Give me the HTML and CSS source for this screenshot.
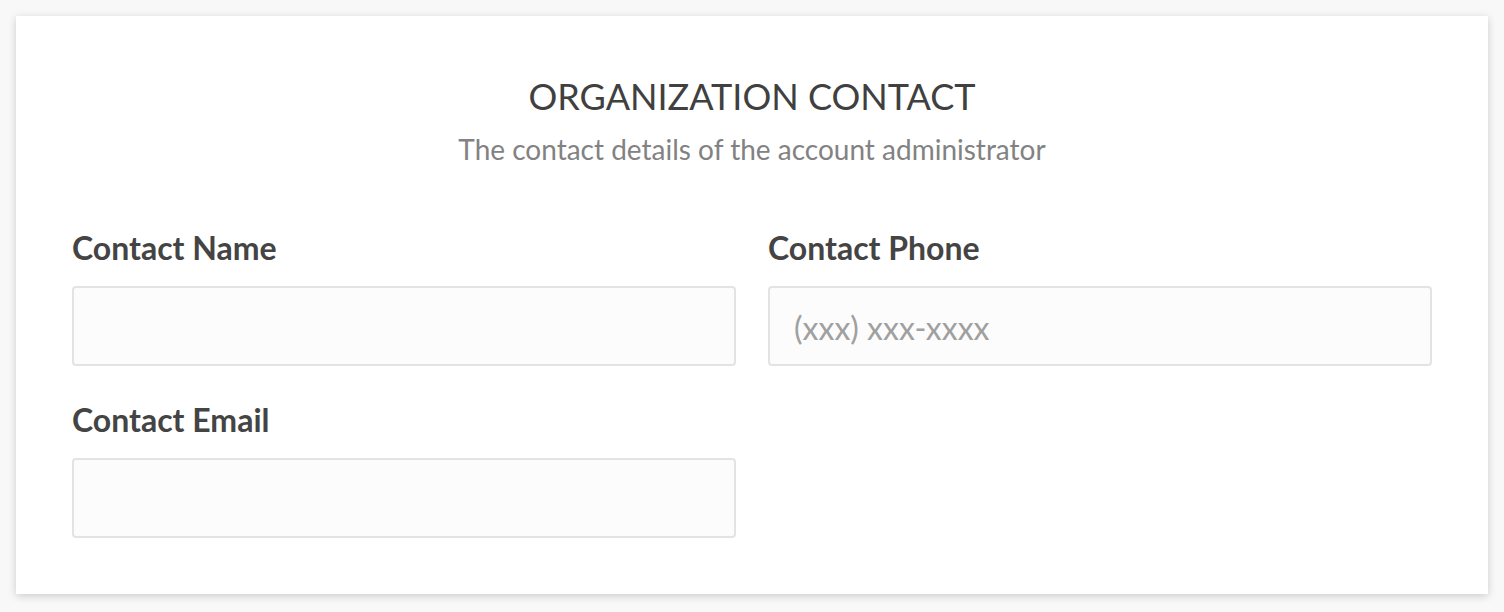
FILE: index.html
```html
<!DOCTYPE html>
<html>
<head>
<meta charset="utf-8">
<link rel="stylesheet" href="styles.css">
</head>
<body>
<div class="card">
  <h1 class="title">ORGANIZATION CONTACT</h1>
  <p class="subtitle">The contact details of the account administrator</p>
  <div class="grid">
    <div class="field">
      <label class="label">Contact Name</label>
      <input class="input" type="text">
    </div>
    <div class="field">
      <label class="label">Contact Phone</label>
      <input class="input" type="text" placeholder="(xxx) xxx-xxxx">
    </div>
    <div class="field">
      <label class="label">Contact Email</label>
      <input class="input" type="text">
    </div>
  </div>
</div>
</body>
</html>
```
FILE: styles.css
```css
html, body {
  margin: 0;
  padding: 0;
  background: #f8f8f8;
  font-family: Lato, "Liberation Sans", sans-serif;
}
body {
  padding: 16px;
}
.card {
  background: #fff;
  box-shadow: 0 2px 8px rgba(0,0,0,0.18);
  padding: 58px 56px 56px;
  height: 578px;
  box-sizing: border-box;
}
.title {
  margin: 0;
  text-align: center;
  font-weight: 400;
  font-size: 36px;
  line-height: 44px;
  color: #404040;
}
.subtitle {
  margin: 14px 0 0;
  text-align: center;
  font-size: 28px;
  line-height: 34px;
  color: #828282;
}
.grid {
  margin-top: 63px;
  display: grid;
  grid-template-columns: 1fr 1fr;
  column-gap: 32px;
  row-gap: 35px;
}
.field {
  display: flex;
  flex-direction: column;
}
.label {
  font-weight: 700;
  font-size: 32px;
  line-height: 38px;
  color: #444;
  margin-bottom: 19px;
}
.input {
  height: 80px;
  box-sizing: border-box;
  border: 2px solid #e3e3e3;
  border-radius: 4px;
  background: #fcfcfc;
  padding: 2px 24px 0;
  font-family: Lato, "Liberation Sans", sans-serif;
  font-size: 32px;
  color: #404040;
  outline: none;
}
.input::placeholder {
  color: #a0a0a0;
}
```
